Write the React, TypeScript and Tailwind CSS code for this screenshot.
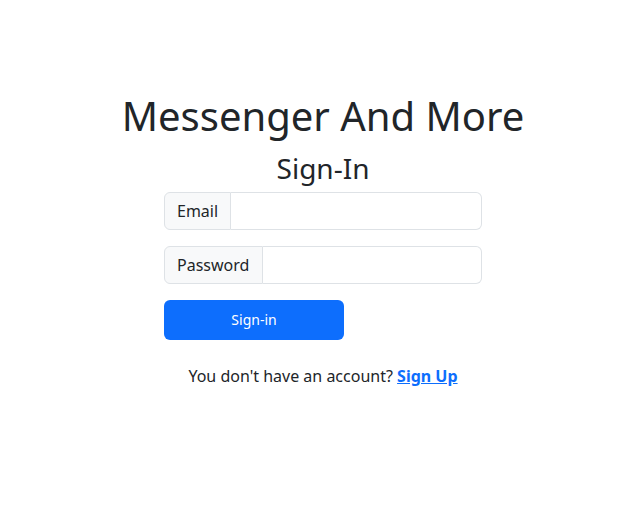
import React from "react";

export default function App() {
  return (
    <div className="w-[628px] h-[522px] bg-white text-[#212529]" style={{ fontFamily: '"Noto Sans", sans-serif' }}>
      <div className="flex flex-col items-center pt-[92px] pl-[18px]">
        <h1 className="text-[40px] leading-[1.2] font-normal m-0">Messenger And More</h1>
        <h2 className="text-[28px] leading-[1.2] font-normal mt-[12px]">Sign-In</h2>
        <div className="w-[318px] mt-[6px] flex flex-col">
          <div className="flex h-[38px]">
            <span className="flex items-center px-3 bg-[#f8f9fa] border border-[#dee2e6] rounded-l-[6px] text-[16px]">Email</span>
            <input className="flex-1 min-w-0 w-0 border border-l-0 border-[#dee2e6] rounded-r-[6px] outline-none px-3" />
          </div>
          <div className="flex h-[38px] mt-[16px]">
            <span className="flex items-center pl-3 pr-[13px] bg-[#f8f9fa] border border-[#dee2e6] rounded-l-[6px] text-[16px]">Password</span>
            <input type="password" className="flex-1 min-w-0 w-0 border border-l-0 border-[#dee2e6] rounded-r-[6px] outline-none px-3" />
          </div>
          <button className="mt-[16px] w-[180px] h-[40px] bg-[#0d6efd] text-white text-[14px] rounded-[6px]">Sign-in</button>
        </div>
        <p className="mt-[24px] text-[16px]">
          You don't have an account?{" "}
          <a href="#" className="font-bold text-[#0d6efd] underline">Sign Up</a>
        </p>
      </div>
    </div>
  );
}
